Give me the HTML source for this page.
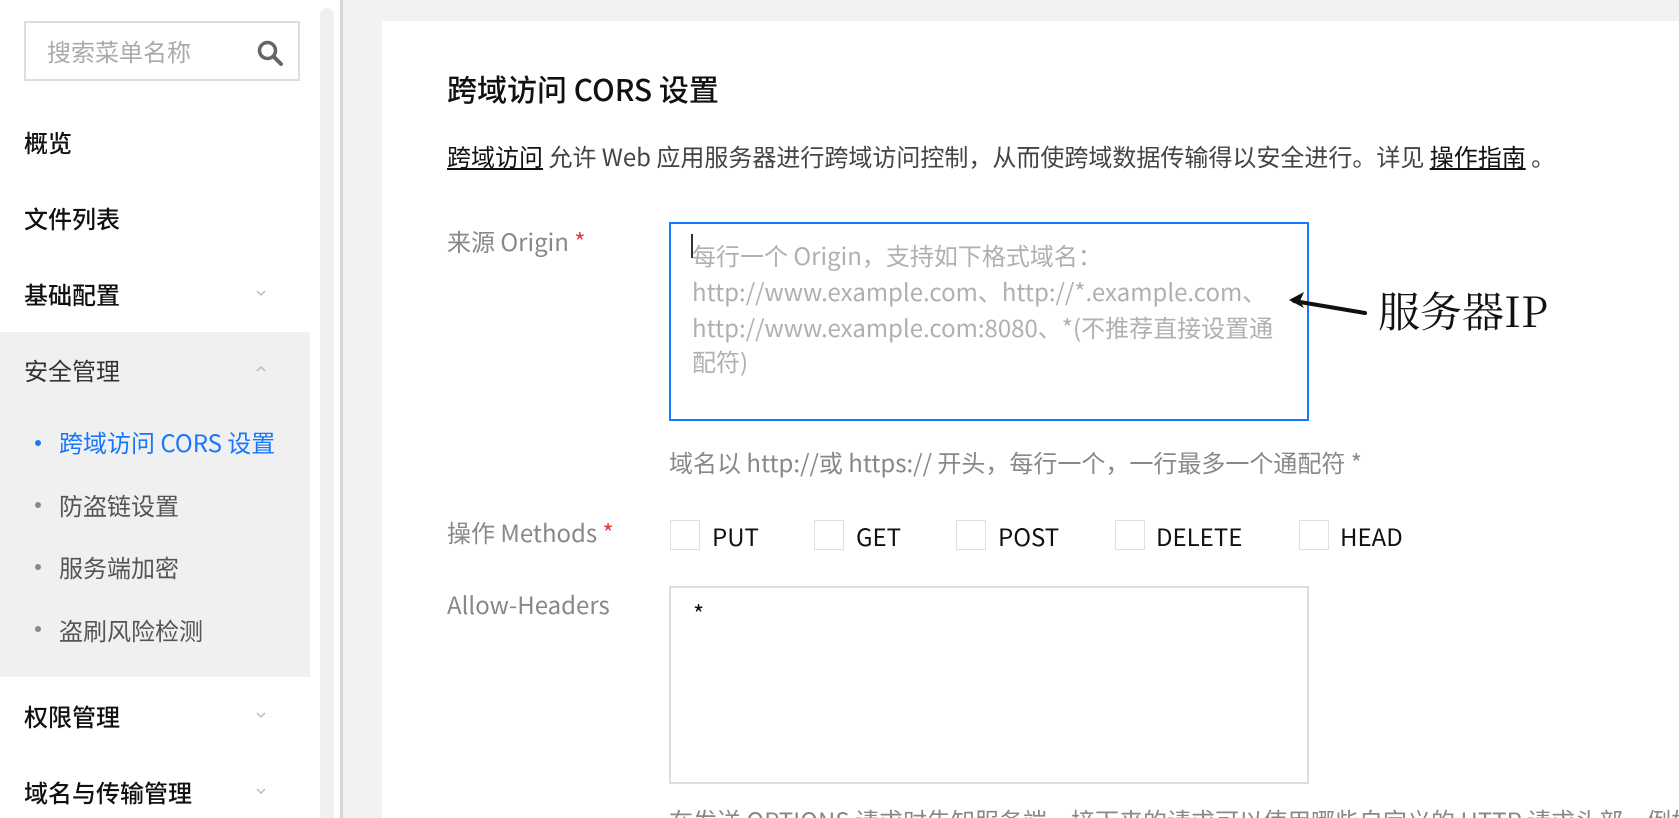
<!DOCTYPE html>
<html style="width:1679px;height:818px;overflow:hidden"><head><meta charset="utf-8"><style>
*{margin:0;padding:0;box-sizing:border-box}
body{width:1679px;height:818px;overflow:hidden;background:#fff;font-family:"Noto Sans CJK SC","Liberation Sans",sans-serif;font-size:24px;color:#222}
#w{position:relative;width:1679px;height:818px;overflow:hidden}
.a{position:absolute;white-space:nowrap;line-height:34px}
.menu{font-weight:500;color:#111;left:24px}
.sub{left:59px;color:#555}
.dot{position:absolute;width:6px;height:6px;border-radius:50%;background:#888;left:35px}
.chev{position:absolute;left:256px;width:10px;height:10px}
.cb{position:absolute;width:30px;height:30px;border:1px solid #dcdfe6;top:520px;background:#fff}
.lbl{color:#888;left:447px}
.ph{color:#b0b0b0;left:692px}
</style></head><body><div id="w">
<div style="position:absolute;left:24px;top:21px;width:276px;height:60px;border:2px solid #ddd"></div>
<div class="a" style="left:47px;top:34px;color:#aaa">搜索菜单名称</div>
<svg style="position:absolute;left:256px;top:39px" width="28" height="28" viewBox="0 0 28 28"><circle cx="11.5" cy="11.5" r="8" fill="none" stroke="#666" stroke-width="3.5"/><path d="M17.5 17.5L25 25" stroke="#666" stroke-width="4" stroke-linecap="round"/></svg>

<div class="a menu" style="top:125px">概览</div>
<div class="a menu" style="top:201px">文件列表</div>
<div class="a menu" style="top:277px">基础配置</div>
<svg class="chev" style="top:288px" viewBox="0 0 10 10"><path d="M1 3l4 4 4-4" fill="none" stroke="#bbb" stroke-width="1.5"/></svg>
<div style="position:absolute;left:0;top:332px;width:310px;height:345px;background:#f0f0f0"></div>
<div class="a" style="left:24px;top:353px;color:#333">安全管理</div>
<svg class="chev" style="top:364px" viewBox="0 0 10 10"><path d="M1 7l4-4 4 4" fill="none" stroke="#bbb" stroke-width="1.5"/></svg>
<div class="dot" style="top:440px;background:#1677ff"></div>
<div class="a sub" style="top:425px;color:#1677ff">跨域访问 CORS 设置</div>
<div class="dot" style="top:502px"></div>
<div class="a sub" style="top:488px">防盗链设置</div>
<div class="dot" style="top:564px"></div>
<div class="a sub" style="top:550px">服务端加密</div>
<div class="dot" style="top:626px"></div>
<div class="a sub" style="top:613px">盗刷风险检测</div>
<div class="a menu" style="top:699px">权限管理</div>
<svg class="chev" style="top:710px" viewBox="0 0 10 10"><path d="M1 3l4 4 4-4" fill="none" stroke="#bbb" stroke-width="1.5"/></svg>
<div class="a menu" style="top:775px">域名与传输管理</div>
<svg class="chev" style="top:786px" viewBox="0 0 10 10"><path d="M1 3l4 4 4-4" fill="none" stroke="#bbb" stroke-width="1.5"/></svg>

<div style="position:absolute;left:320px;top:8px;width:14px;height:830px;border-radius:7px;background:#f0f0f0"></div>
<div style="position:absolute;left:340px;top:0;width:3px;height:818px;background:#d6d6d6"></div>
<div style="position:absolute;left:343px;top:0;width:1336px;height:818px;background:#f2f2f2"></div>
<div style="position:absolute;left:382px;top:21px;width:1297px;height:797px;background:#fff"></div>

<div class="a" style="left:447px;top:68px;font-size:30px;line-height:40px;color:#111;font-weight:500">跨域访问 CORS 设置</div>
<div class="a" style="left:447px;top:139px;color:#444"><span style="text-decoration:underline;color:#111">跨域访问</span> 允许 Web 应用服务器进行跨域访问控制，从而使跨域数据传输得以安全进行。详见 <span style="text-decoration:underline;color:#111">操作指南</span> 。</div>

<div class="a lbl" style="top:224px">来源 Origin <span style="color:#e53935">*</span></div>
<div style="position:absolute;left:669px;top:222px;width:640px;height:199px;border:2px solid #1677ff"></div>
<div style="position:absolute;left:691px;top:234px;width:1.5px;height:24px;background:#333"></div>
<div class="a ph" style="top:238px">每行一个 Origin，支持如下格式域名：</div>
<div class="a ph" style="top:274px">http://www.example.com、http://*.example.com、</div>
<div class="a ph" style="top:310px">http://www.example.com:8080、*(不推荐直接设置通</div>
<div class="a ph" style="top:344px">配符)</div>

<svg style="position:absolute;left:1280px;top:290px" width="95" height="32" viewBox="0 0 95 32"><path d="M85 23L14 11" stroke="#111" stroke-width="4" stroke-linecap="round"/><path d="M9 10L24 2L20 11L24 18Z" fill="#111"/></svg>
<div class="a" style="left:1378px;top:285px;font-size:42px;line-height:50px;font-family:'Noto Serif CJK SC','Liberation Serif',serif;color:#111">服务器IP</div>

<div class="a" style="left:669px;top:445px;color:#888">域名以 http://或 https:// 开头，每行一个，一行最多一个通配符 *</div>

<div class="a lbl" style="top:515px">操作 Methods <span style="color:#e53935">*</span></div>
<div class="cb" style="left:670px"></div><div class="a" style="left:712px;top:519px;color:#111">PUT</div>
<div class="cb" style="left:814px"></div><div class="a" style="left:856px;top:519px;color:#111">GET</div>
<div class="cb" style="left:956px"></div><div class="a" style="left:998px;top:519px;color:#111">POST</div>
<div class="cb" style="left:1115px"></div><div class="a" style="left:1156px;top:519px;color:#111">DELETE</div>
<div class="cb" style="left:1299px"></div><div class="a" style="left:1340px;top:519px;color:#111">HEAD</div>

<div class="a lbl" style="top:587px">Allow-Headers</div>
<div style="position:absolute;left:669px;top:586px;width:640px;height:198px;border:2px solid #ddd"></div>
<div class="a" style="left:693px;top:596px;color:#111">*</div>

<div class="a" style="left:669px;top:803px;color:#888">在发送 OPTIONS 请求时告知服务端，接下来的请求可以使用哪些自定义的 HTTP 请求头部，例如</div>
</div></body></html>
